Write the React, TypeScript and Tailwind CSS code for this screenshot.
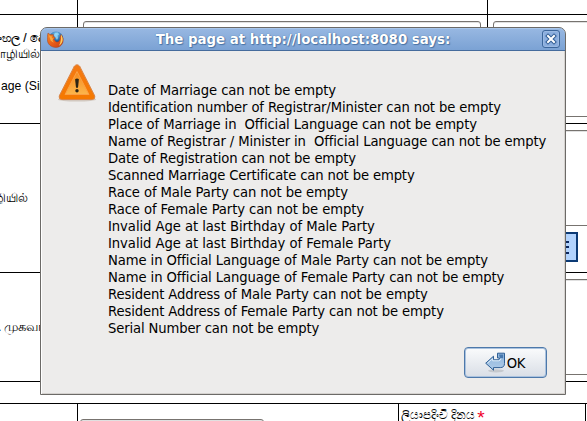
import type { ReactNode } from "react";

const messages: [string, string][] = [
  ["Date of Marriage can not be empty", "tracking-[-0.11px]"],
  ["Identification number of Registrar/Minister can not be empty", "tracking-[-0.13px]"],
  ["Place of Marriage in  Official Language can not be empty", "tracking-[-0.11px]"],
  ["Name of Registrar / Minister in  Official Language can not be empty", "tracking-[-0.11px]"],
  ["Date of Registration can not be empty", "tracking-[-0.13px]"],
  ["Scanned Marriage Certificate can not be empty", "tracking-[-0.14px]"],
  ["Race of Male Party can not be empty", "tracking-[-0.1px]"],
  ["Race of Female Party can not be empty", "tracking-[-0.1px]"],
  ["Invalid Age at last Birthday of Male Party", "tracking-[-0.06px]"],
  ["Invalid Age at last Birthday of Female Party", "tracking-[-0.06px]"],
  ["Name in Official Language of Male Party can not be empty", "tracking-[-0.1px]"],
  ["Name in Official Language of Female Party can not be empty", "tracking-[-0.1px]"],
  ["Resident Address of Male Party can not be empty", "tracking-[-0.11px]"],
  ["Resident Address of Female Party can not be empty", "tracking-[-0.11px]"],
  ["Serial Number can not be empty", "tracking-[-0.14px]"],
];

function Label({ children, className }: { children?: ReactNode; className: string }) {
  return <div className={`shrink-0 overflow-hidden whitespace-nowrap border-r border-black ${className}`}>{children}</div>;
}

function Box({ className }: { className: string }) {
  return <div className={`rounded-[3px] border border-[#77736f] shadow-[inset_0_1px_0_#e0e0e0] ${className}`} />;
}

function FormPage() {
  return (
    <div className="flex h-[421px] w-[587px] flex-col text-[12px] leading-[16px]">
      <div className="flex h-[15px] shrink-0 border-b border-black">
        <Label className="w-[78px]" />
        <Label className="w-[410px]" />
      </div>
      <div className="flex h-[109px] shrink-0 border-b border-black">
        <Label className="flex w-[78px] flex-col pt-[15px]">
          <div className="ml-[-10px] text-[12px] [-webkit-text-stroke:0.2px_#000]">සිංහල / දෙමළ</div>
          <div className="ml-[-19px] text-[12px]">மொழியில்</div>
          <div className="ml-px mt-[16px] text-[12.2px]">age (Sinhala)</div>
        </Label>
        <Label className="w-[410px] pl-[5px] pt-[6px]">
          <Box className="h-[96px] w-[398px]" />
        </Label>
        <div className="flex-1 overflow-hidden pl-[5px] pt-[6px]">
          <Box className="h-[96px] w-[110px]" />
        </div>
      </div>
      <div className="flex h-[149px] shrink-0 border-b border-black">
        <Label className="w-[78px] pt-[66px]">
          <div className="ml-[-31px] text-[12px]">மொழியில்</div>
        </Label>
        <Label className="w-[410px]" />
        <div className="flex flex-1 flex-col overflow-hidden pl-[5px] pt-[6px]">
          <Box className="h-[96px] w-[110px] shrink-0" />
          <div className="mt-[6px] flex h-[30px] w-[85px] shrink-0 flex-col items-end justify-center gap-[3.5px] border-2 border-[#0b3a75] bg-[#b2d3fd] pr-[7px]">
            <span className="h-[2px] w-5 bg-[#0b2860]" />
            <span className="h-[2px] w-5 bg-[#0b2860]" />
            <span className="h-[2px] w-5 bg-[#0b2860]" />
          </div>
        </div>
      </div>
      <div className="flex h-[109px] shrink-0 border-b border-black">
        <Label className="w-[78px] pt-[46px]">
          <div className="ml-[-2px] text-[12.5px] [word-spacing:-0.5px]">. முகவரி</div>
        </Label>
        <Label className="w-[410px]" />
        <div className="flex-1 overflow-hidden pl-[5px] pt-[6px]">
          <Box className="h-[96px] w-[110px]" />
        </div>
      </div>
      <div className="h-[22px] shrink-0 border-b border-black" />
      <div className="flex h-[17px] shrink-0 overflow-hidden">
        <Label className="w-[78px]" />
        <Label className="w-[321px] pl-[2px] pt-[15px]">
          <Box className="h-[20px] w-[184px]" />
        </Label>
        <Label className="w-[187px] pl-[2px] pt-[2px]">
          <div className="flex h-[15px] items-start gap-[2px] text-[11.6px] leading-[18px]">
            <span>ලියාපදිංචි දිනය</span>
            <span className="pt-[3px] text-[19px] text-[#f00028]">*</span>
          </div>
        </Label>
      </div>
    </div>
  );
}

function Firefox() {
  return (
    <svg width="17" height="17" viewBox="0 0 17 17">
      <defs>
        <radialGradient id="globe" cx=".5" cy=".2" r=".8">
          <stop stopColor="#83c9f1" /><stop offset=".5" stopColor="#226cad" /><stop offset="1" stopColor="#16285f" />
        </radialGradient>
        <linearGradient id="fox" x2="1" y2="1">
          <stop stopColor="#f58a25" /><stop offset=".55" stopColor="#e85a16" /><stop offset="1" stopColor="#c2401b" />
        </linearGradient>
      </defs>
      <circle cx="9" cy="7.8" r="7.3" fill="url(#globe)" />
      <path d="M1 2 3 3.6 6.7 3.7 6 5.4 8.6 6.5 6.7 8.1 8.6 10.5C11.2 12 13.3 10 12.9 6.4L14 3.6C17 7 17 12 13.4 14.9 9 18 2.6 16.1.8 11.2-.2 8 .4 4.5 1 2Z" fill="url(#fox)" stroke="#a24425" strokeWidth=".5" />
      <path d="M14 3.6C17 8 15.8 12.4 12 14.7 14 11 14.2 8 14 3.6Z" fill="#fbd05f" />
      <path d="m1.8 4.3 1.7 1 2 .1-1 1.7 2 .5-1 1.7 1.3 2.5-3-2Z" fill="#f9a83f" />
      <path d="m8 2 3-.5 1 2-1.5 1L11 7l-1 2-2-3-1-2Z" fill="#9bdcf7" opacity=".75" />
    </svg>
  );
}

function Warning() {
  return (
    <svg width="40" height="40" viewBox="0 0 40 40">
      <defs>
        <linearGradient id="rim" x2="0" y2="1"><stop stopColor="#f47a14" /><stop offset="1" stopColor="#f57900" /></linearGradient>
        <linearGradient id="inside" x2="0" y2="1"><stop stopColor="#f58a1e" /><stop offset="1" stopColor="#fcb64c" /></linearGradient>
      </defs>
      <ellipse cx="20" cy="36.5" rx="19" ry="2" fill="#8c6d50" opacity=".28" />
      <path d="M17.3 3.3Q20 .2 22.7 3.3L37.8 33Q38.5 36.3 35.2 36.5H4.8Q1.5 36.3 2.2 33Z" fill="url(#rim)" stroke="#d9864a" />
      <path d="M20 8.5 32 31.5H8Z" fill="url(#inside)" stroke="#fba044" strokeLinejoin="round" />
      <path d="M18.1 16.2Q20 14.8 21.9 16.2L21 24.8H19Z" fill="#2b2415" />
      <circle cx="20" cy="27.8" r="1.7" fill="#2b2415" />
    </svg>
  );
}

function ReturnIcon() {
  return (
    <svg width="21" height="21" viewBox="0 0 21 21">
      <defs><linearGradient id="arrow" x2="0" y2="1"><stop stopColor="#8fb5dc" /><stop offset="1" stopColor="#aecbe8" /></linearGradient></defs>
      <ellipse cx="11" cy="18.8" rx="8" ry="1.6" fill="#777" opacity=".25" />
      <path d="M12.5 1.2h7v10.2q0 4.2-4.2 4.2H8.5v2.6L.7 11.2 8.5 4.2v3.6h4.7Q14.5 7.5 14.5 6H12.5Z" fill="url(#arrow)" stroke="#2f5f95" strokeLinejoin="round" />
      <path d="M14 2.5h4.2v3.7H15Z" fill="#4778ae" />
      <path d="M2.6 11.1 7.6 6.7v2.1h6.2q2-.3 2.2-2.3" fill="none" stroke="#dcebf8" />
    </svg>
  );
}

function Dialog() {
  return (
    <section className="absolute left-[40px] top-[27px] flex h-[368px] w-[526px] flex-col overflow-hidden rounded-t-[7px] border border-[#6c6a67] bg-[#edeceb] font-['DejaVu_Sans_Condensed','DejaVu_Sans',sans-serif] text-black shadow-[inset_1px_0_0_#fff,inset_-1px_-1px_0_#d5d2cf]">
      <header className="-mx-px -mt-px flex h-[24px] shrink-0 items-center rounded-t-[7px] border border-[#456b9c] bg-linear-to-b from-[#98b8e2] to-[#7ba2d4] pl-[6px] pr-[5px] shadow-[inset_0_1px_0_#a9c6ea]">
        <Firefox />
        <h1 className="flex-1 whitespace-nowrap pt-[2px] text-center font-['DejaVu_Sans',sans-serif] text-[13.33px] font-bold leading-[20px] text-white [text-shadow:0_0_1px_#365f91,1px_1px_1px_#4b75a7]">
          The page at http://localhost:8080 says:
        </h1>
        <button aria-label="Close" className="flex size-[18px] items-center justify-center rounded-[3px] border border-[#3c669b] bg-[#8baede] shadow-[inset_0_0_0_1px_#9ab9e2]">
          <svg width="12" height="12" viewBox="0 0 12 12"><path d="m3 3 6 6m0-6L3 9" stroke="#315d94" strokeWidth="4" strokeLinecap="square" /><path d="m3 3 6 6m0-6L3 9" stroke="#fff" strokeWidth="2" strokeLinecap="square" /></svg>
        </button>
      </header>
      <div className="flex h-[290px] shrink-0 pl-[16px] pt-[12px]">
        <Warning />
        <div className="ml-[11px] mt-[18px] whitespace-pre text-[14.67px] leading-[17px]">
          {messages.map(([text, tracking]) => <p key={text} className={tracking}>{text}</p>)}
        </div>
      </div>
      <div className="flex justify-end pr-[18px] pt-[6px]">
        <button className="flex h-[31px] w-[83px] items-center justify-center gap-[1px] rounded-[4px] border border-[#4d78aa] bg-linear-to-b from-[#fafbfc] to-[#d9dee6] pr-px text-[14.67px] leading-[17px] tracking-[-0.2px] shadow-[inset_0_0_0_1px_#aac2de]">
          <ReturnIcon />OK
        </button>
      </div>
    </section>
  );
}

export default function App() {
  return (
    <main className="relative h-[421px] w-[587px] overflow-hidden bg-white font-['Liberation_Sans','Noto_Sans',sans-serif] text-black">
      <FormPage />
      <Dialog />
    </main>
  );
}
